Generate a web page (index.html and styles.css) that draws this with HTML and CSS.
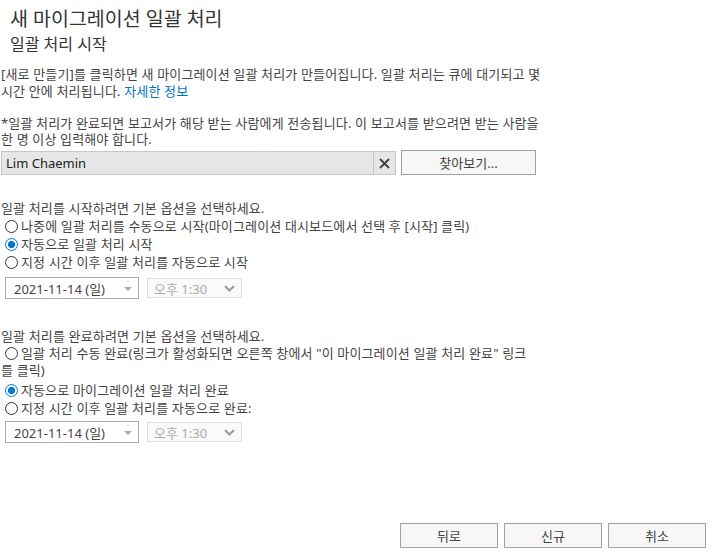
FILE: index.html
```html
<!DOCTYPE html>
<html lang="ko">
<head>
    <meta charset="UTF-8">
    <title>새 마이그레이션 일괄 처리</title>
    <link rel="stylesheet" href="styles.css">
</head>
<body>
<div class="page">
    <h1 class="title">새 마이그레이션 일괄 처리</h1>
    <h2 class="subtitle">일괄 처리 시작</h2>

    <p class="note intro">[새로 만들기]를 클릭하면 새 마이그레이션 일괄 처리가 만들어집니다. 일괄 처리는 큐에 대기되고 몇 시간 안에 처리됩니다. <a href="#">자세한 정보</a></p>
    <p class="note report">*일괄 처리가 완료되면 보고서가 해당 받는 사람에게 전송됩니다. 이 보고서를 받으려면 받는 사람을 한 명 이상 입력해야 합니다.</p>

    <div class="recipients">
        <div class="picker">
            <span class="name">Lim Chaemin</span>
            <span class="clear">
                <svg width="11" height="11" viewBox="0 0 11 11"><path d="M1 1 L10 10 M10 1 L1 10" stroke="#444" stroke-width="2"/></svg>
            </span>
        </div>
        <button class="btn browse">찾아보기...</button>
    </div>

    <!-- start options -->
    <div class="options start">
        <p class="label">일괄 처리를 시작하려면 기본 옵션을 선택하세요.</p>
        <label class="choice"><input type="radio" name="start">나중에 일괄 처리를 수동으로 시작(마이그레이션 대시보드에서 선택 후 [시작] 클릭)</label>
        <label class="choice"><input type="radio" name="start" checked>자동으로 일괄 처리 시작</label>
        <label class="choice"><input type="radio" name="start">지정 시간 이후 일괄 처리를 자동으로 시작</label>
        <div class="when">
            <div class="select date">2021-11-14 (일)<span class="caret"></span></div>
            <div class="select time">오후 1:30<svg class="chev" width="11" height="7" viewBox="0 0 11 7"><path d="M1 1 L5.5 5.5 L10 1" fill="none" stroke="#999" stroke-width="2"/></svg></div>
        </div>
    </div>

    <!-- finish options -->
    <div class="options finish">
        <p class="label">일괄 처리를 완료하려면 기본 옵션을 선택하세요.</p>
        <label class="choice wrap"><input type="radio" name="finish">일괄 처리 수동 완료(링크가 활성화되면 오른쪽 창에서 "이 마이그레이션 일괄 처리 완료" 링크를 클릭)</label>
        <label class="choice"><input type="radio" name="finish" checked>자동으로 마이그레이션 일괄 처리 완료</label>
        <label class="choice"><input type="radio" name="finish">지정 시간 이후 일괄 처리를 자동으로 완료:</label>
        <div class="when">
            <div class="select date">2021-11-14 (일)<span class="caret"></span></div>
            <div class="select time">오후 1:30<svg class="chev" width="11" height="7" viewBox="0 0 11 7"><path d="M1 1 L5.5 5.5 L10 1" fill="none" stroke="#999" stroke-width="2"/></svg></div>
        </div>
    </div>

    <div class="actions">
        <button class="btn">뒤로</button>
        <button class="btn">신규</button>
        <button class="btn">취소</button>
    </div>
</div>
</body>
</html>
```

FILE: styles.css
```css
body {
    margin: 0;
    background: #fff;
    font-family: "Noto Sans", "Noto Sans CJK KR", sans-serif;
    color: #444;
}
.page {
    height: 559px;
    box-sizing: border-box;
    padding: 7px 0 11px 1px;
    display: flex;
    flex-direction: column;
}
.title {
    margin: 0 0 0 9px;
    font-size: 19.5px;
    line-height: 24px;
    font-weight: normal;
    color: #333;
}
.subtitle {
    margin: 3px 0 0 9px;
    font-size: 16px;
    line-height: 20px;
    font-weight: normal;
    color: #333;
}
.note {
    width: 542px;
    margin: 12px 0 0;
    font-size: 13px;
    letter-spacing: 0.15px;
    line-height: 17px;
}
.note.report {
    margin-top: 15px;
    line-height: 16px;
}
.note a {
    color: #0072c6;
    text-decoration: none;
}
.recipients {
    display: flex;
    gap: 5px;
    margin-top: 4px;
}
.picker {
    width: 395px;
    height: 24px;
    box-sizing: border-box;
    display: flex;
    border: 1px solid #c6c6c6;
    background: #e6e6e6;
}
.picker .name {
    flex: 1;
    padding-left: 4px;
    font-size: 13px;
    line-height: 22px;
    color: #222;
}
.picker .clear {
    width: 21px;
    border-left: 1px solid #c6c6c6;
    display: flex;
    align-items: center;
    justify-content: center;
}
.btn {
    height: 25px;
    border: 1px solid #9aa4a7;
    background: #f7f7f7;
    font-family: "Noto Sans", "Noto Sans CJK KR", sans-serif;
    font-size: 13px;
    color: #444;
    padding: 0;
}
.browse {
    width: 135px;
    margin-top: -1px;
}
.options {
    font-size: 13px;
    letter-spacing: 0.15px;
}
.options.start {
    margin-top: 25px;
}
.options.finish {
    margin-top: 29px;
}
.label {
    margin: 0;
    line-height: 17px;
}
.choice {
    display: block;
    line-height: 18px;
}
.choice.wrap {
    width: 536px;
    line-height: 17px;
    margin-bottom: 2px;
}
.choice input {
    appearance: none;
    width: 13px;
    height: 13px;
    box-sizing: border-box;
    margin: 0 3px 0 4px;
    border: 1px solid #333;
    border-radius: 50%;
    background: #fff;
    vertical-align: -2px;
}
.choice input:checked {
    border-color: #0078d7;
    background: radial-gradient(circle, #0078d7 0 3.3px, #fff 3.9px);
}
.when {
    display: flex;
    gap: 8px;
    margin: 6px 0 0 4px;
    letter-spacing: 0;
}
.finish .when {
    margin-top: 4px;
}
.select {
    height: 22px;
    box-sizing: border-box;
    display: flex;
    align-items: center;
    justify-content: space-between;
    padding: 0 6px 0 8px;
    font-size: 13px;
}
.select.date {
    width: 134px;
    border: 1px solid #ababab;
    color: #444;
}
.select.time {
    width: 95px;
    height: 20px;
    margin-top: 1px;
    border: 1px solid #dcdcdc;
    background: #fafafa;
    color: #aaa;
    padding-left: 6px;
}
.caret {
    width: 0;
    height: 0;
    border-left: 4px solid transparent;
    border-right: 4px solid transparent;
    border-top: 4px solid #aaa;
    margin-top: 2px;
}
.actions {
    margin-top: auto;
    display: flex;
    justify-content: flex-end;
    gap: 6px;
    padding-right: 12px;
}
.actions .btn {
    width: 98px;
}
```
